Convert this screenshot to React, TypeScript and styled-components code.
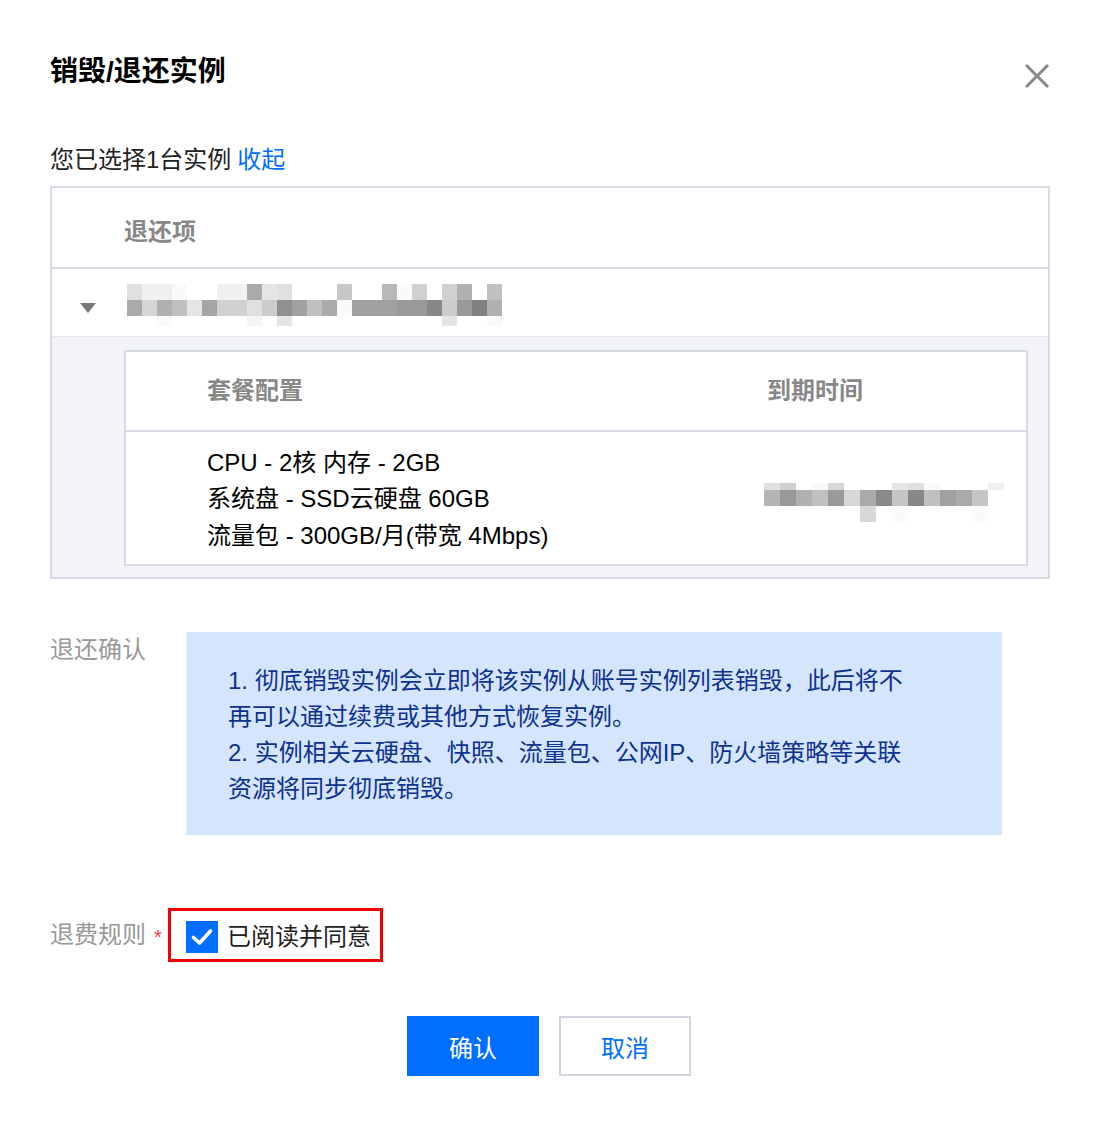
import React from 'react';
import styled, {createGlobalStyle} from 'styled-components';

const GlobalStyle = createGlobalStyle`
  html, body {
    margin: 0;
    padding: 0;
    background: #ffffff;
  }

  body {
    font-family: "Liberation Sans", "Noto Sans CJK SC", sans-serif;
    color: #000000;
  }
`

const Dialog = styled.div`
  width: 1098px;
  box-sizing: border-box;
  padding: 52px 48px 50px 50px;
  background: #ffffff;
`

const Header = styled.div`
  display: flex;
  justify-content: space-between;
  align-items: center;
  height: 40px;
`

const Title = styled.h1`
  margin: 0;
  font-size: 28px;
  font-weight: 700;
  line-height: 40px;
  color: #000000;
`

const CloseButton = styled.button`
  width: 26px;
  height: 26px;
  margin: 8px 0 0 0;
  padding: 0;
  border: none;
  background: none;
  cursor: pointer;
`

const Selected = styled.div`
  margin-top: 50px;
  font-size: 24px;
  line-height: 36px;
  color: #222222;

  a {
    color: #006eff;
    text-decoration: none;
    margin-left: 6px;
  }
`

const OuterTable = styled.div`
  margin-top: 8px;
  width: 1000px;
  box-sizing: border-box;
  border: 2px solid #d6dbe4;
`

const HeadRow = styled.div`
  height: 81px;
  box-sizing: border-box;
  padding: 4px 0 0 72px;
  display: flex;
  align-items: center;
  border-bottom: 2px solid #d6dbe4;
  font-size: 24px;
  font-weight: 700;
  color: #888888;
`

const ItemRow = styled.div`
  height: 68px;
  display: flex;
  align-items: center;
  padding: 5px 0 0 28px;
  box-sizing: border-box;
  gap: 31px;
  border-bottom: 1px solid #e4e7ee;
`

const Caret = styled.span`
  width: 0;
  height: 0;
  margin-top: 6px;
  border-left: 8px solid transparent;
  border-right: 8px solid transparent;
  border-top: 10px solid #7a7a7a;
`

const Expansion = styled.div`
  background: #f2f4f8;
  padding: 13px 20px 11px 72px;
`

const InnerTable = styled.div`
  border: 2px solid #d6dbe4;
  background: #ffffff;
`

const Grid = styled.div<{ head?: boolean }>`
  display: grid;
  grid-template-columns: 641px 1fr;
  align-items: center;
  height: ${(props) => props.head ? "78px" : "129px"};
  border-bottom: ${(props) => props.head ? "2px solid #d6dbe4" : "none"};
  padding-top: ${(props) => props.head ? "0" : "3px"};
  box-sizing: content-box;
  font-size: 24px;
  font-weight: ${(props) => props.head ? 700 : 400};
  color: ${(props) => props.head ? "#888888" : "#000000"};
`

const Cell = styled.div<{ first?: boolean }>`
  padding-left: ${(props) => props.first ? "81px" : "0"};
  line-height: 36.5px;
`

const CellMosaic = styled.div`
  padding: 6px 0 0 0;
  margin-left: -3px;
`

const NoticeSection = styled.div`
  margin-top: 53px;
  display: flex;
`

const FieldLabel = styled.div<{ top?: boolean }>`
  width: 136px;
  flex-shrink: 0;
  align-self: ${(props) => props.top ? "flex-start" : "center"};
  font-size: 24px;
  line-height: 36px;
  color: #999999;
  display: flex;
  align-items: center;
`

const Required = styled.span`
  color: #e54545;
  font-size: 20px;
  margin-left: 8px;
  margin-top: 4px;
`

const Notice = styled.div`
  width: 816px;
  box-sizing: border-box;
  padding: 31px 40px 28px 42px;
  background: #d5e5fd;
  color: #0d3290;
  font-size: 24px;
  line-height: 36px;

  p {
    margin: 0;
    max-width: 688px;
  }
`

const RuleRow = styled.div`
  margin-top: 73px;
  display: flex;
  align-items: center;
`

const Highlight = styled.label`
  display: flex;
  align-items: center;
  gap: 9px;
  margin-left: -18px;
  padding: 10px 9px 6px 15px;
  border: 3px solid #f00000;
  font-size: 24px;
  line-height: 32px;
  color: #222222;
`

const CheckBox = styled.span`
  width: 32px;
  height: 32px;
  background: #006eff;
  display: flex;
  align-items: center;
  justify-content: center;
`

const Footer = styled.div`
  margin: 54px -48px 0 -50px;
  display: flex;
  justify-content: center;
  gap: 20px;
`

const Button = styled.button<{ primary?: boolean }>`
  width: 132px;
  height: 60px;
  box-sizing: border-box;
  font-family: "Liberation Sans", "Noto Sans CJK SC", sans-serif;
  font-size: 24px;
  background: ${(props) => props.primary ? "#006eff" : "#ffffff"};
  color: ${(props) => props.primary ? "#ffffff" : "#006eff"};
  border: ${(props) => props.primary ? "none" : "2px solid #d0d5de"};
  cursor: pointer;
`

// blurred / pixelated values, drawn as a grid of grey cells
function Mosaic({rows, cell, heights}: { rows: string[][], cell: number, heights: number[] }) {
    const width = Math.max(...rows.map(r => r.length)) * cell;
    const height = heights.reduce((a, b) => a + b, 0);
    let y = 0;
    return (
        <svg width={width} height={height} style={{display: "block"}}>
            {rows.map((row, ri) => {
                const top = y;
                y += heights[ri];
                return row.map((c, ci) => c === "fff" ? null :
                    <rect key={ri + "-" + ci} x={ci * cell} y={top} width={cell} height={heights[ri]} fill={"#" + c}/>);
            })}
        </svg>
    );
}

const nameRows = [
    "e0e0e0 f0f0f0 f0f0f0 fafafa fff fff f0f0f0 f0f0f0 aaaaaa e5e5e5 e0e0e0 fff fff fff c8c8c8 fff fff b8b8b8 fafafa d0d0d0 fff d0d0d0 b0b0b0 fff c0c0c0".split(" "),
    "aaaaaa d5d5d5 b0b0b0 c0c0c0 e5e5e5 a5a5a5 d0d0d0 d0d0d0 e0e0e0 cccccc 909090 a0a0a0 c0c0c0 aaaaaa fafafa a0a0a0 a0a0a0 a0a0a0 999999 9a9a9a 888888 cccccc 999999 808080 b0b0b0".split(" "),
    "fff fff fafafa fff fff fff fff fff f5f5f5 fff e5e5e5 fff fff fff fff fff fff fff fff fff fff e5e5e5 fff fff fafafa".split(" "),
];

const dateRows = [
    "e0e0e0 d0d0d0 fff f8f8f8 d8d8d8 fff fff fff e5e5e5 e0e0e0 fafafa fff fff fff f0f0f0".split(" "),
    "b5b5b5 999999 b0b0b0 c0c0c0 9a9a9a d8d8d8 aaaaaa 8a8a8a c5c5c5 888888 c0c0c0 a0a0a0 aaaaaa c5c5c5 fff".split(" "),
    "fff fff fff fff fff fff d8d8d8 fff fafafa fff fff fff fff fafafa fff".split(" "),
];

function App() {
    return (
        <Dialog>
            <GlobalStyle/>
            <Header>
                <Title>销毁/退还实例</Title>
                <CloseButton aria-label="close">
                    <svg width="26" height="26" viewBox="0 0 26 26">
                        <path d="M2 2 L24 24 M24 2 L2 24" stroke="#888888" strokeWidth="3" fill="none"/>
                    </svg>
                </CloseButton>
            </Header>

            <Selected>您已选择1台实例<a href="#">收起</a></Selected>

            <OuterTable>
                <HeadRow>退还项</HeadRow>
                <ItemRow>
                    <Caret/>
                    <Mosaic rows={nameRows} cell={15} heights={[16, 16, 10]}/>
                </ItemRow>
                <Expansion>
                    <InnerTable>
                        <Grid head>
                            <Cell first>套餐配置</Cell>
                            <Cell>到期时间</Cell>
                        </Grid>
                        <Grid>
                            <Cell first>
                                <div>CPU - 2核 内存 - 2GB</div>
                                <div>系统盘 - SSD云硬盘 60GB</div>
                                <div>流量包 - 300GB/月(带宽 4Mbps)</div>
                            </Cell>
                            <CellMosaic>
                                <Mosaic rows={dateRows} cell={16} heights={[7, 16, 16]}/>
                            </CellMosaic>
                        </Grid>
                    </InnerTable>
                </Expansion>
            </OuterTable>

            <NoticeSection>
                <FieldLabel top>退还确认</FieldLabel>
                <Notice>
                    <p>1. 彻底销毁实例会立即将该实例从账号实例列表销毁，此后将不再可以通过续费或其他方式恢复实例。</p>
                    <p>2. 实例相关云硬盘、快照、流量包、公网IP、防火墙策略等关联资源将同步彻底销毁。</p>
                </Notice>
            </NoticeSection>

            <RuleRow>
                <FieldLabel>退费规则<Required>*</Required></FieldLabel>
                <Highlight>
                    <CheckBox>
                        <svg width="22" height="18" viewBox="0 0 22 18">
                            <path d="M2.5 9.5 L8.5 15 L19.5 3" stroke="#ffffff" strokeWidth="3.6" fill="none"
                                  strokeLinecap="round" strokeLinejoin="round"/>
                        </svg>
                    </CheckBox>
                    已阅读并同意
                </Highlight>
            </RuleRow>

            <Footer>
                <Button primary>确认</Button>
                <Button>取消</Button>
            </Footer>
        </Dialog>
    );
}

export default App;
